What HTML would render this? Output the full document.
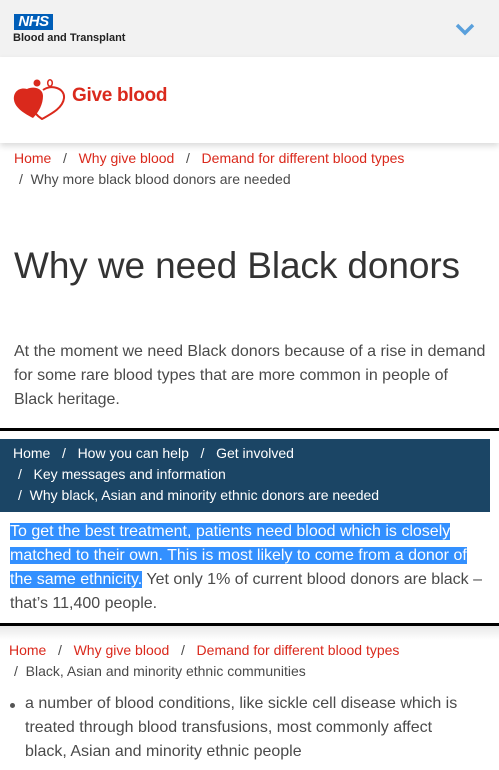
<!DOCTYPE html>
<html><head><meta charset="utf-8"><style>
*{margin:0;padding:0;box-sizing:border-box}
body{width:499px;height:770px;overflow:hidden;background:#fff;font-family:"Liberation Sans",Arial,sans-serif;position:relative;color:#4a4a4a}
.a{position:absolute}
.r{color:#da291c}
.bc{font-size:14px;line-height:21px}
.p{font-size:16px;line-height:24px}
</style></head><body>
<div class="a" style="left:0;top:0;width:499px;height:57px;background:#f2f2f2;box-shadow:0 2px 6px rgba(0,0,0,.25)"></div>
<div class="a" style="left:14px;top:14px;width:39px;height:16px;background:#005eb8;color:#fff;font-weight:bold;font-style:italic;font-size:15px;line-height:16px;text-align:center;letter-spacing:-0.5px">NHS</div>
<div class="a" style="left:13px;top:32px;font-size:11px;font-weight:bold;color:#222">Blood and Transplant</div>
<svg class="a" style="left:455px;top:22px" width="20" height="14" viewBox="0 0 20 14"><path d="M2 3 L10 11 L18 3" fill="none" stroke="#5aa0dc" stroke-width="3.5"/></svg>
<div class="a" style="left:0;top:57px;width:499px;height:86px;background:#fff;box-shadow:0 3px 6px rgba(0,0,0,.15)"></div>
<svg class="a" style="left:13px;top:78px" width="54" height="42" viewBox="0 0 54 42">
<circle cx="24" cy="5" r="3.5" fill="#da291c"/>
<ellipse cx="37" cy="5" rx="2.3" ry="3.2" fill="none" stroke="#da291c" stroke-width="1.5"/>
<path d="M14 11 C6 9 0 14 1 22 C2 30 12 36 20 40 C26 34 30 26 30 18 C30 10 20 8 14 11Z" fill="#da291c"/>
<path d="M30 12 C38 6 52 10 51 20 C50 30 38 36 29 41 C23 37 20 33 19 29" fill="none" stroke="#da291c" stroke-width="2"/>
</svg>
<div class="a r" style="left:72px;top:85px;font-size:19px;font-weight:bold;letter-spacing:-0.3px">Give blood</div>
<div class="a bc" style="left:14px;top:148px"><span class="r">Home</span>&nbsp;&nbsp; / &nbsp;&nbsp;<span class="r">Why give blood</span>&nbsp;&nbsp; / &nbsp;&nbsp;<span class="r">Demand for different blood types</span></div>
<div class="a bc" style="left:19px;top:169px">/ &nbsp;Why more black blood donors are needed</div>
<div class="a" style="left:14px;top:243px;font-size:37px;line-height:46px;color:#333;font-weight:300;letter-spacing:-0.1px">Why we need Black donors</div>
<div class="a p" style="left:14px;top:340px;width:474px">At the moment we need Black donors because of a rise in demand for some rare blood types that are more common in people of Black heritage.</div>
<div class="a" style="left:0;top:428px;width:499px;height:3px;background:#000"></div>
<div class="a" style="left:0;top:439px;width:490px;height:73px;background:#1b4565"></div>
<div class="a bc" style="left:13px;top:443px;color:#fff">Home&nbsp;&nbsp; / &nbsp;&nbsp;How you can help&nbsp;&nbsp; / &nbsp;&nbsp;Get involved</div>
<div class="a bc" style="left:18px;top:464px;color:#fff">/ &nbsp;&nbsp;Key messages and information</div>
<div class="a bc" style="left:18px;top:485px;color:#fff">/ &nbsp;Why black, Asian and minority ethnic donors are needed</div>
<div class="a p" style="left:10px;top:520px;width:478px"><span style="background:#3390ff;color:#fff">To get the best treatment, patients need blood which is closely matched to their own. This is most likely to come from a donor of the same ethnicity.</span> Yet only 1% of current blood donors are black – that’s 11,400 people.</div>
<div class="a" style="left:0;top:623px;width:499px;height:3px;background:#000"></div>
<div class="a" style="left:0;top:626px;width:499px;height:14px;background:linear-gradient(#e8e8e8,#fff)"></div>
<div class="a bc" style="left:9px;top:640px"><span class="r">Home</span>&nbsp;&nbsp; / &nbsp;&nbsp;<span class="r">Why give blood</span>&nbsp;&nbsp; / &nbsp;&nbsp;<span class="r">Demand for different blood types</span></div>
<div class="a bc" style="left:14px;top:661px">/ &nbsp;Black, Asian and minority ethnic communities</div>
<div class="a" style="left:10px;top:703px;width:5px;height:5px;border-radius:50%;background:#555"></div>
<div class="a p" style="left:25px;top:692px;width:445px">a number of blood conditions, like sickle cell disease which is treated through blood transfusions, most commonly affect black, Asian and minority ethnic people</div>
</body></html>
